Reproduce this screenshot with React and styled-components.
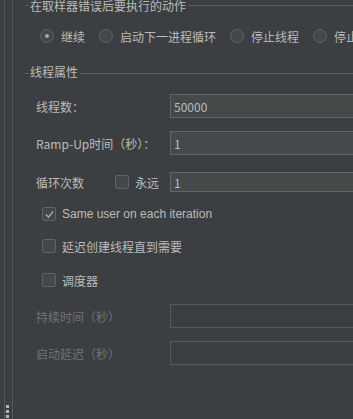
import React from 'react';
import styled, { createGlobalStyle } from 'styled-components';

const GlobalStyle = createGlobalStyle`
  html, body {
    margin: 0;
    padding: 0;
    background: #3c3f41;
  }
  body {
    font-family: "Noto Sans CJK SC", "Noto Sans", sans-serif;
    font-size: 12px;
    color: #bbbbbb;
  }
`;

const Page = styled.div`
  display: flex;
  width: 353px;
  height: 419px;
  overflow: hidden;
  background: #3c3f41;
`;

const Gutter = styled.div`
  margin-left: 4px;
  width: 7px;
  border-left: 1px solid #55585a;
  border-right: 1px solid #55585a;
  display: flex;
  flex-direction: column;
  justify-content: flex-end;
  align-items: flex-start;
  padding-bottom: 1px;
  flex-shrink: 0;
`;

const Grip = styled.div`
  display: flex;
  flex-direction: column;
  gap: 2px;
  margin-left: 1px;
`;

const GripDot = styled.span`
  width: 3px;
  height: 3px;
  background: #b5b5b5;
`;

const Content = styled.div`
  flex: 1;
  min-width: 0;
  display: flex;
  flex-direction: column;
`;

const Legend = styled.div`
  display: flex;
  align-items: flex-start;
  height: 14px;
  margin-top: ${p => p.$top}px;
  padding-left: 12px;
`;

const LegendDash = styled.span`
  width: 4px;
  height: 1px;
  margin-top: ${p => p.$line}px;
  background: #5a5d5f;
`;

const LegendText = styled.span`
  padding: 0 2px 0 1px;
  line-height: 14px;
  margin-top: -1px;
  white-space: nowrap;
`;

const LegendLine = styled.span`
  flex: 1;
  height: 1px;
  margin-top: ${p => p.$line}px;
  background: #5a5d5f;
`;

const RadioRow = styled.div`
  display: flex;
  align-items: center;
  height: 20px;
  margin-top: 12px;
  padding-left: 27px;
  gap: 14px;
  white-space: nowrap;
`;

const Option = styled.label`
  display: flex;
  align-items: center;
  gap: 7px;
  flex-shrink: 0;
`;

const Radio = styled.span`
  width: 12px;
  height: 12px;
  border: 1px solid #5f6365;
  border-radius: 50%;
  background: #43494a;
  display: flex;
  align-items: center;
  justify-content: center;
  &::after {
    content: '';
    width: 4px;
    height: 4px;
    border-radius: 50%;
    background: ${p => (p.$checked ? '#a9a9a9' : 'transparent')};
  }
`;

const Form = styled.div`
  display: flex;
  flex-direction: column;
  padding-left: 23px;
`;

const FieldRow = styled.div`
  display: grid;
  grid-template-columns: 134px 1fr;
  align-items: center;
  margin-top: ${p => p.$top}px;
  margin-right: -10px;
`;

const Label = styled.span`
  color: ${p => (p.$disabled ? '#717373' : '#bbbbbb')};
  white-space: nowrap;
`;

const LoopLabel = styled.div`
  display: flex;
  align-items: center;
`;

const LoopName = styled.span`
  width: 79px;
`;

const Input = styled.div`
  height: ${p => p.$h}px;
  box-sizing: border-box;
  border: 1px solid ${p => (p.$disabled ? '#575a5c' : '#646464')};
  background: ${p => (p.$disabled ? '#3c3f41' : '#45494a')};
  color: #b3bcc7;
  padding-left: 3px;
  display: flex;
  align-items: center;
`;

const CheckRow = styled.label`
  display: flex;
  align-items: center;
  gap: 6px;
  height: 20px;
  margin-top: ${p => p.$top}px;
  padding-left: ${p => p.$indent}px;
`;

const LatinText = styled.span`
  font-family: "Liberation Sans", "Noto Sans CJK SC", sans-serif;
`;

const Box = styled.span`
  width: 12px;
  height: 12px;
  border: 1px solid #5f6365;
  border-radius: 2px;
  background: #43494a;
  display: flex;
  align-items: center;
  justify-content: center;
  flex-shrink: 0;
`;

const Check = () => (
  <svg width="11" height="11" viewBox="0 0 11 11">
    <path d="M2 5.5 L4.5 8.2 L9 2.5" fill="none" stroke="#a6a6a6" strokeWidth="1.5" />
  </svg>
);

export default function App() {
  return (
    <>
      <GlobalStyle />
      <Page>
        <Gutter>
          <Grip>
            <GripDot />
            <GripDot />
            <GripDot />
          </Grip>
        </Gutter>
        <Content>
          <Legend $top={0}>
            <LegendDash $line={5} />
            <LegendText>在取样器错误后要执行的动作</LegendText>
            <LegendLine $line={5} />
          </Legend>
          <RadioRow>
            <Option><Radio $checked />继续</Option>
            <Option><Radio />启动下一进程循环</Option>
            <Option><Radio />停止线程</Option>
            <Option><Radio />停止测试</Option>
          </RadioRow>

          <Legend $top={20}>
            <LegendDash $line={7} />
            <LegendText>线程属性</LegendText>
            <LegendLine $line={7} />
          </Legend>

          <Form>
            <FieldRow $top={14}>
              <Label>线程数：</Label>
              <Input $h={24}>50000</Input>
            </FieldRow>
            <FieldRow $top={13}>
              <Label>Ramp-Up时间（秒）：</Label>
              <Input $h={24}>1</Input>
            </FieldRow>
            <FieldRow $top={17}>
              <LoopLabel>
                <LoopName>循环次数</LoopName>
                <CheckRow $top={0} $indent={0}>
                  <Box />
                  永远
                </CheckRow>
              </LoopLabel>
              <Input $h={20}>1</Input>
            </FieldRow>
          </Form>

          <CheckRow $top={12} $indent={29}>
            <Box><Check /></Box>
            <LatinText>Same user on each iteration</LatinText>
          </CheckRow>
          <CheckRow $top={12} $indent={29}>
            <Box />
            延迟创建线程直到需要
          </CheckRow>
          <CheckRow $top={14} $indent={29}>
            <Box />
            调度器
          </CheckRow>

          <Form>
            <FieldRow $top={14}>
              <Label $disabled>持续时间（秒）</Label>
              <Input $h={24} $disabled />
            </FieldRow>
            <FieldRow $top={13}>
              <Label $disabled>启动延迟（秒）</Label>
              <Input $h={24} $disabled />
            </FieldRow>
          </Form>
        </Content>
      </Page>
    </>
  );
}
